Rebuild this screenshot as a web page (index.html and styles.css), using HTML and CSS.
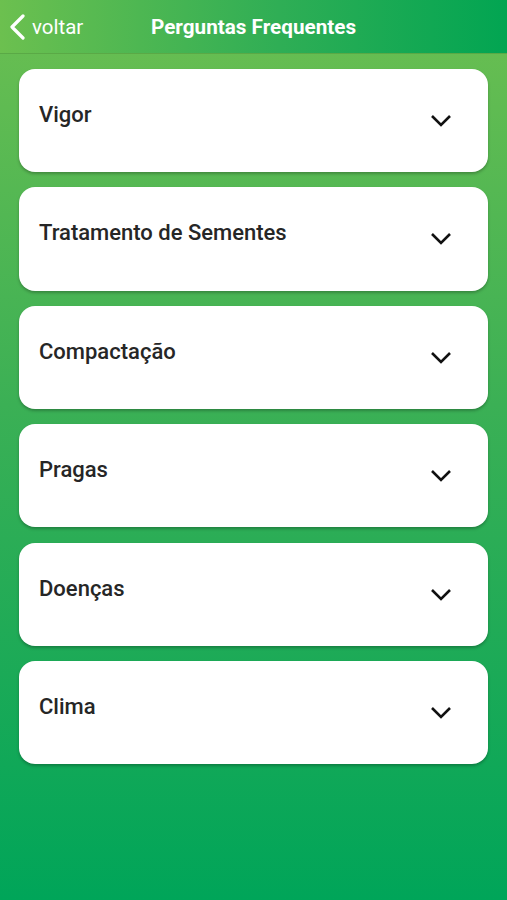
FILE: index.html
```html
<html>
    <head>
        <title>Perguntas Frequentes</title>
        <link rel="stylesheet" href="styles.css">
    </head>
    <body>
        <header class="topo">
            <a class="voltar" href="#">
                <svg class="voltar-icone" width="16" height="26" viewBox="0 0 16 26">
                    <path d="M14 2 L3 13 L14 24" fill="none" stroke="#ffffff" stroke-width="3.2" stroke-linecap="round" stroke-linejoin="round"/>
                </svg>
                <span>voltar</span>
            </a>
            <h1>Perguntas Frequentes</h1>
        </header>
        <div class="lista">
            <div class="item">
                <span class="item-titulo">Vigor</span>
                <svg class="seta" width="22" height="13" viewBox="0 0 22 13"><path d="M2 2 L11 11 L20 2" fill="none" stroke="#111" stroke-width="2.6"/></svg>
            </div>
            <div class="item">
                <span class="item-titulo">Tratamento de Sementes</span>
                <svg class="seta" width="22" height="13" viewBox="0 0 22 13"><path d="M2 2 L11 11 L20 2" fill="none" stroke="#111" stroke-width="2.6"/></svg>
            </div>
            <div class="item">
                <span class="item-titulo">Compactação</span>
                <svg class="seta" width="22" height="13" viewBox="0 0 22 13"><path d="M2 2 L11 11 L20 2" fill="none" stroke="#111" stroke-width="2.6"/></svg>
            </div>
            <div class="item">
                <span class="item-titulo">Pragas</span>
                <svg class="seta" width="22" height="13" viewBox="0 0 22 13"><path d="M2 2 L11 11 L20 2" fill="none" stroke="#111" stroke-width="2.6"/></svg>
            </div>
            <div class="item">
                <span class="item-titulo">Doenças</span>
                <svg class="seta" width="22" height="13" viewBox="0 0 22 13"><path d="M2 2 L11 11 L20 2" fill="none" stroke="#111" stroke-width="2.6"/></svg>
            </div>
            <div class="item">
                <span class="item-titulo">Clima</span>
                <svg class="seta" width="22" height="13" viewBox="0 0 22 13"><path d="M2 2 L11 11 L20 2" fill="none" stroke="#111" stroke-width="2.6"/></svg>
            </div>
        </div>
    </body>
</html>
```
FILE: styles.css
```css
body {
    margin: 0;
    font-family: Roboto, "Liberation Sans", Arial, sans-serif;
    width: 507px;
    height: 900px;
    background: linear-gradient(to bottom, #6cbf51 0%, #3bb055 45%, #00a559 100%);
    overflow: hidden;
}
.topo {
    height: 54px;
    display: flex;
    align-items: center;
    background: linear-gradient(to right, #6cc04f 0%, #2fae55 55%, #02a552 100%);
    border-bottom: 1px solid #5aa946;
    box-sizing: border-box;
}
.voltar {
    display: flex;
    align-items: center;
    gap: 7px;
    margin-left: 9px;
    color: #ffffff;
    text-decoration: none;
    font-size: 20.5px;
    width: 142px;
}
.voltar-icone {
    display: block;
}
.topo h1 {
    margin: 0;
    font-size: 20.7px;
    font-weight: 700;
    color: #ffffff;
}
.lista {
    display: flex;
    flex-direction: column;
    gap: 15.2px;
    padding: 15px 19px 0 19px;
}
.item {
    height: 103.2px;
    background: #ffffff;
    border-radius: 16px;
    box-shadow: 0 2px 3px rgba(0, 0, 0, 0.25);
    display: flex;
    justify-content: space-between;
    align-items: flex-start;
    padding: 33px 36px 0 20px;
    box-sizing: border-box;
}
.item-titulo {
    font-size: 22px;
    font-weight: 500;
    color: #262626;
    line-height: 26px;
}
.seta {
    margin-top: 12px;
}
```
